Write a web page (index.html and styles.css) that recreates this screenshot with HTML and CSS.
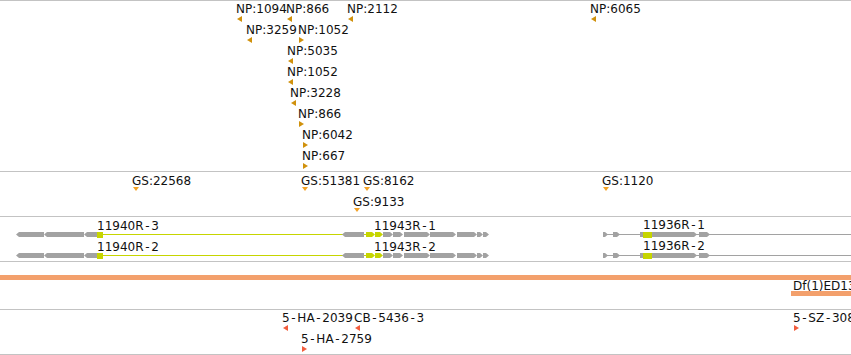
FILE: index.html
```
<!DOCTYPE html>
<html lang="en">
<head>
    <meta charset="UTF-8">
    <title>Region tracks</title>
    <link rel="stylesheet" href="styles.css">
</head>
<body>
    <div class="panel">
        <div class="track track-np" id="npTrack"></div>
        <div class="track track-gs" id="gsTrack"></div>
        <div class="track track-gene" id="geneTrack">
            <svg class="glyphs" id="geneGlyphs" width="851" height="44"></svg>
        </div>
        <div class="track track-df" id="dfTrack">
            <div class="band"></div>
            <div class="feat df">
                <span class="label">Df(1)ED13</span>
                <div class="df-bar"></div>
            </div>
        </div>
        <div class="track track-probe" id="probeTrack"></div>
    </div>

    <script>
        // x = start of the label, y = top of the capitals, inside the track
        const npFeatures = [
            { x: 237, y: 3, name: 'NP:1094', dir: 'left' },
            { x: 287, y: 3, name: 'NP:866', dir: 'left' },
            { x: 348, y: 3, name: 'NP:2112', dir: 'left' },
            { x: 591, y: 3, name: 'NP:6065', dir: 'left' },
            { x: 247, y: 24, name: 'NP:3259', dir: 'left' },
            { x: 299, y: 24, name: 'NP:1052', dir: 'right' },
            { x: 288, y: 45, name: 'NP:5035', dir: 'left' },
            { x: 288, y: 66, name: 'NP:1052', dir: 'left' },
            { x: 291, y: 87, name: 'NP:3228', dir: 'left' },
            { x: 299, y: 108, name: 'NP:866', dir: 'right' },
            { x: 303, y: 129, name: 'NP:6042', dir: 'right' },
            { x: 303, y: 150, name: 'NP:667', dir: 'right' }
        ];

        const gsFeatures = [
            { x: 133, y: 4, name: 'GS:22568', dir: 'down' },
            { x: 302, y: 4, name: 'GS:51381', dir: 'down' },
            { x: 364, y: 4, name: 'GS:8162', dir: 'down' },
            { x: 603, y: 4, name: 'GS:1120', dir: 'down' },
            { x: 354, y: 25, name: 'GS:9133', dir: 'down' }
        ];

        const geneLabels = [
            { x: 98, y: 4, name: '11940R-3' },
            { x: 98, y: 25, name: '11940R-2' },
            { x: 375, y: 4, name: '11943R-1' },
            { x: 375, y: 25, name: '11943R-2' },
            { x: 644, y: 3, name: '11936R-1' },
            { x: 644, y: 24, name: '11936R-2' }
        ];

        const probeFeatures = [
            { x: 283, y: 3, name: '5-HA-2039', dir: 'left' },
            { x: 355, y: 3, name: 'CB-5436-3', dir: 'left' },
            { x: 302, y: 24, name: '5-HA-2759', dir: 'right' },
            { x: 794, y: 3, name: '5-SZ-308', dir: 'right' }
        ];

        // labels with their strand marker
        function renderFeatures(trackId, features, kind) {
            const track = document.getElementById(trackId);
            track.insertAdjacentHTML('beforeend', features.map(f => `
                <div class="feat ${kind}" style="left:${f.x}px;top:${f.y - 1}px">
                    <span class="label">${f.name.replace(/-/g, '<span class="dash">-</span>')}</span>
                    ${f.dir ? `<i class="mark mark-${f.dir}"></i>` : ''}
                </div>
            `).join(''));
        }

        // gene glyphs
        const GRAY = '#a2a2a2';
        const LIME = '#c6d500';

        function exon(x0, x1, y, tip, color) {
            const m = y + 2.5, b = y + 5;
            let pts;
            if (tip === 'l') pts = `${x0},${m} ${x0 + 3},${y} ${x1},${y} ${x1},${b} ${x0 + 3},${b}`;
            else if (tip === 'r') pts = `${x0},${y} ${x1 - 3},${y} ${x1},${m} ${x1 - 3},${b} ${x0},${b}`;
            else pts = `${x0},${y} ${x1},${y} ${x1},${b} ${x0},${b}`;
            return `<polygon points="${pts}" fill="${color}"/>`;
        }

        function intron(x0, x1, y, color) {
            return `<rect x="${x0}" y="${y + 2}" width="${x1 - x0}" height="1" fill="${color}"/>`;
        }

        function cds(x0, x1, y) {
            return `<rect x="${x0}" y="${y}" width="${x1 - x0}" height="6" fill="${LIME}"/>`;
        }

        function geneRow(y) {
            return [
                // 11940R
                intron(103, 367, y, LIME),
                exon(16, 44, y, 'l', GRAY),
                exon(44, 84, y, 'l', GRAY),
                exon(84, 97, y, 'l', GRAY),
                cds(97, 103, y),
                // 11943R
                exon(342, 364, y, 'l', GRAY),
                exon(366, 375, y, 'r', LIME),
                exon(375, 383, y, 'r', LIME),
                exon(383, 393, y, 'r', GRAY),
                exon(393, 403, y, 'r', GRAY),
                exon(404, 430, y, 'r', GRAY),
                exon(430, 456, y, 'r', GRAY),
                exon(457, 477, y, 'r', GRAY),
                exon(477, 483, y, 'r', GRAY),
                exon(483, 489, y, 'r', GRAY),
                // 11936R
                intron(603, 851, y, GRAY),
                exon(603, 608, y, 'r', GRAY),
                exon(613, 620, y, 'r', GRAY),
                exon(640, 643, y, '', GRAY),
                cds(643, 652, y),
                exon(652, 697, y, 'r', GRAY),
                exon(699, 710, y, 'r', GRAY)
            ].join('');
        }

        document.getElementById('geneGlyphs').innerHTML = geneRow(15) + geneRow(36);

        renderFeatures('npTrack', npFeatures, 'np');
        renderFeatures('gsTrack', gsFeatures, 'gs');
        renderFeatures('geneTrack', geneLabels, 'gene');
        renderFeatures('probeTrack', probeFeatures, 'probe');
    </script>
</body>
</html>
```

FILE: styles.css
```
:root {
    --rule: #c3c3c3;
    --np-mark: #d0910c;
    --gs-mark: #f3a226;
    --probe-mark: #f25d3d;
    --df-color: #f3a06c;
}

body {
    margin: 0;
    background: #ffffff;
    color: #111111;
    font-family: 'DejaVu Sans', sans-serif;
}

.panel {
    width: 851px;
    overflow: hidden;
    border-bottom: 1px solid var(--rule);
}

.track {
    position: relative;
    border-top: 1px solid var(--rule);
}

.track-np { height: 170px; }
.track-gs { height: 44px; }
.track-gene { height: 44px; }
.track-df { height: 47px; }
.track-probe { height: 44px; }

.glyphs {
    position: absolute;
    top: 0;
    left: 0;
    display: block;
}

.feat {
    position: absolute;
    white-space: nowrap;
}

.label {
    display: block;
    margin-left: -1px;
    font-size: 12px;
    line-height: 12px;
}

/* the labels are drawn with a wider hyphen */
.dash {
    padding: 0 1.7px;
}

.mark {
    display: block;
    width: 0;
    height: 0;
    margin-top: 1px;
}

.np { --mark: var(--np-mark); }
.gs { --mark: var(--gs-mark); }
.probe { --mark: var(--probe-mark); }

.mark-left {
    border-top: 3px solid transparent;
    border-bottom: 3px solid transparent;
    border-right: 5px solid var(--mark);
}

.mark-right {
    border-top: 3px solid transparent;
    border-bottom: 3px solid transparent;
    border-left: 5px solid var(--mark);
}

.mark-down {
    margin-top: 0;
    border-left: 3px solid transparent;
    border-right: 3px solid transparent;
    border-top: 4px solid var(--mark);
}

.band {
    position: absolute;
    left: 0;
    right: 0;
    top: 13px;
    height: 5px;
    background: var(--df-color);
}

.df {
    left: 791px;
    top: 18px;
}

.df .label {
    margin-left: 2px;
}

.df-bar {
    width: 80px;
    height: 5px;
    margin-top: -1px;
    background: var(--df-color);
}
```
